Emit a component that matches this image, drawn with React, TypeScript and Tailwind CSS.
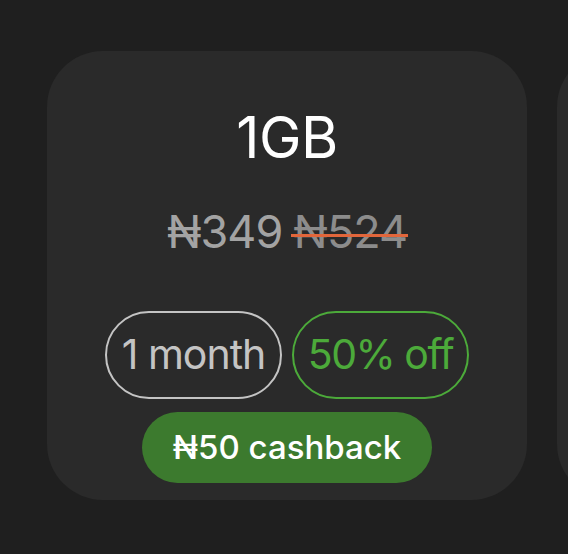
import React from 'react';

const font = { fontFamily: 'Inter, "Noto Sans", sans-serif' };

const PlanCard: React.FC = () => (
  <div className="flex h-[449px] w-[480px] shrink-0 flex-col items-center rounded-[56px] bg-[#2a2a2a] pt-[58px]">
    <div className="text-[57px] leading-none text-white tracking-[-0.5px]">1GB</div>
    <div className="mt-[43px] flex items-baseline gap-[11px] text-[45px] leading-none tracking-[-1px]">
      <span className="text-[#a3a3a3]">₦349</span>
      <span className="relative text-[#8c8c8c]">
        ₦524
        <span className="absolute -left-[2px] -right-[1px] top-[55%] h-[3px] bg-[#e2663b]" />
      </span>
    </div>
    <div className="mt-[57px] flex gap-[10px]">
      <div className="flex h-[88px] w-[177px] items-center justify-center rounded-full border-2 border-[#c4c4c4] text-[41px] text-[#c4c4c4] tracking-[-1px]">
        1 month
      </div>
      <div className="flex h-[88px] w-[177px] items-center justify-center rounded-full border-2 border-[#4caa3a] text-[41px] text-[#4caa3a] tracking-[-1.5px]">
        50% off
      </div>
    </div>
    <div className="mt-[13px] flex h-[71px] w-[290px] items-center justify-center rounded-full bg-[#3c7a2e] text-[33px] font-medium text-white">
      ₦50 cashback
    </div>
  </div>
);

export default function App() {
  return (
    <div style={font} className="flex h-[554px] w-[568px] gap-[30px] overflow-hidden bg-[#1f1f1f] pl-[47px] pt-[51px]">
      <PlanCard />
      <div className="h-[449px] w-[480px] shrink-0 rounded-[56px] bg-[#2a2a2a]" />
    </div>
  );
}
